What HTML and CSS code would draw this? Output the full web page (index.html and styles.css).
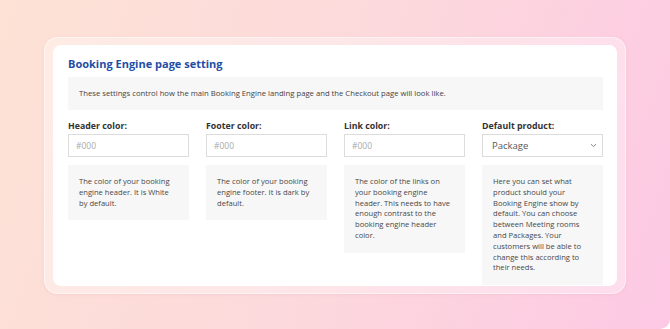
FILE: index.html
```html
<!DOCTYPE html>
<html lang="en">
<head>
    <meta charset="UTF-8">
    <meta name="viewport" content="width=device-width, initial-scale=1.0">
    <title>Booking Engine page setting</title>
    <link rel="stylesheet" href="styles.css">
</head>
<body>
    <div class="backdrop">
        <div class="frame">
            <div class="card">
                <h1 class="title">Booking Engine page setting</h1>
                <div class="intro">These settings control how the main Booking Engine landing page and the Checkout page will look like.</div>

                <!-- Campos -->
                <div class="fields">
                    <div class="field">
                        <label>Header color:</label>
                        <input type="text" placeholder="#000">
                        <div class="help">The color of your booking engine header. It is White by default.</div>
                    </div>
                    <div class="field">
                        <label>Footer color:</label>
                        <input type="text" placeholder="#000">
                        <div class="help">The color of your booking engine footer. It is dark by default.</div>
                    </div>
                    <div class="field">
                        <label>Link color:</label>
                        <input type="text" placeholder="#000">
                        <div class="help">The color of the links on your booking engine header. This needs to have enough contrast to the booking engine header color.</div>
                    </div>
                    <div class="field">
                        <label>Default product:</label>
                        <div class="select">
                            <span>Package</span>
                            <svg width="7" height="5" viewBox="0 0 7 5"><path d="M1 1.2 L3.5 3.6 L6 1.2" fill="none" stroke="#777" stroke-width="0.9"/></svg>
                        </div>
                        <div class="help">Here you can set what product should your Booking Engine show by default. You can choose between Meeting rooms and Packages. Your customers will be able to change this according to their needs.</div>
                    </div>
                </div>
            </div>
        </div>
    </div>
</body>
</html>
```

FILE: styles.css
```css
html, body {
    margin: 0;
    padding: 0;
    background: #fff;
}
body {
    font-family: "Open Sans", sans-serif;
}
.backdrop {
    width: 670px;
    height: 329px;
    box-sizing: border-box;
    padding: 37px 44px 0 44px;
    background: linear-gradient(110deg, #fde2d5 0%, #fcd9dc 50%, #fdc8e4 100%);
    border-radius: 0 0 10px 0;
    overflow: hidden;
}
.frame {
    width: 582px;
    box-sizing: border-box;
    padding: 7px 8px 7px 8px;
    background: rgba(255, 255, 255, 0.35);
    border: 1px solid rgba(255, 255, 255, 0.5);
    border-radius: 14px;
    box-shadow: 0 1px 3px rgba(230, 170, 180, 0.25);
}
.card {
    background: #fff;
    border-radius: 8px;
    padding: 11px 14px 1px 15px;
}
.title {
    margin: 0 0 6px 0;
    font-size: 11px;
    font-weight: 700;
    color: #1f4ea6;
    line-height: 15px;
}
.intro {
    background: #f7f7f7;
    padding: 11px 11px;
    font-size: 7.7px;
    line-height: 11px;
    color: #444;
}
.fields {
    display: grid;
    grid-template-columns: repeat(4, 121px);
    column-gap: 17px;
    margin-top: 10px;
    align-items: start;
}
.field label {
    display: block;
    font-size: 8.8px;
    font-weight: 700;
    color: #333;
    line-height: 12px;
    margin-bottom: 2px;
}
.field input,
.select {
    display: block;
    width: 121px;
    height: 23px;
    box-sizing: border-box;
    border: 1px solid #dcdcdc;
    background: #fff;
    font-family: "Open Sans", sans-serif;
    font-size: 8.5px;
    padding: 0 7px;
    margin: 0;
    outline: none;
}
.field input::placeholder {
    color: #aaa;
}
.select {
    display: flex;
    align-items: center;
    justify-content: space-between;
    font-size: 9.5px;
    color: #555;
    padding: 0 5px 0 9px;
}
.help {
    margin-top: 8px;
    background: #f7f7f7;
    padding: 11px 10px 12px 11px;
    font-size: 7.6px;
    line-height: 10.8px;
    color: #484848;
}
```
